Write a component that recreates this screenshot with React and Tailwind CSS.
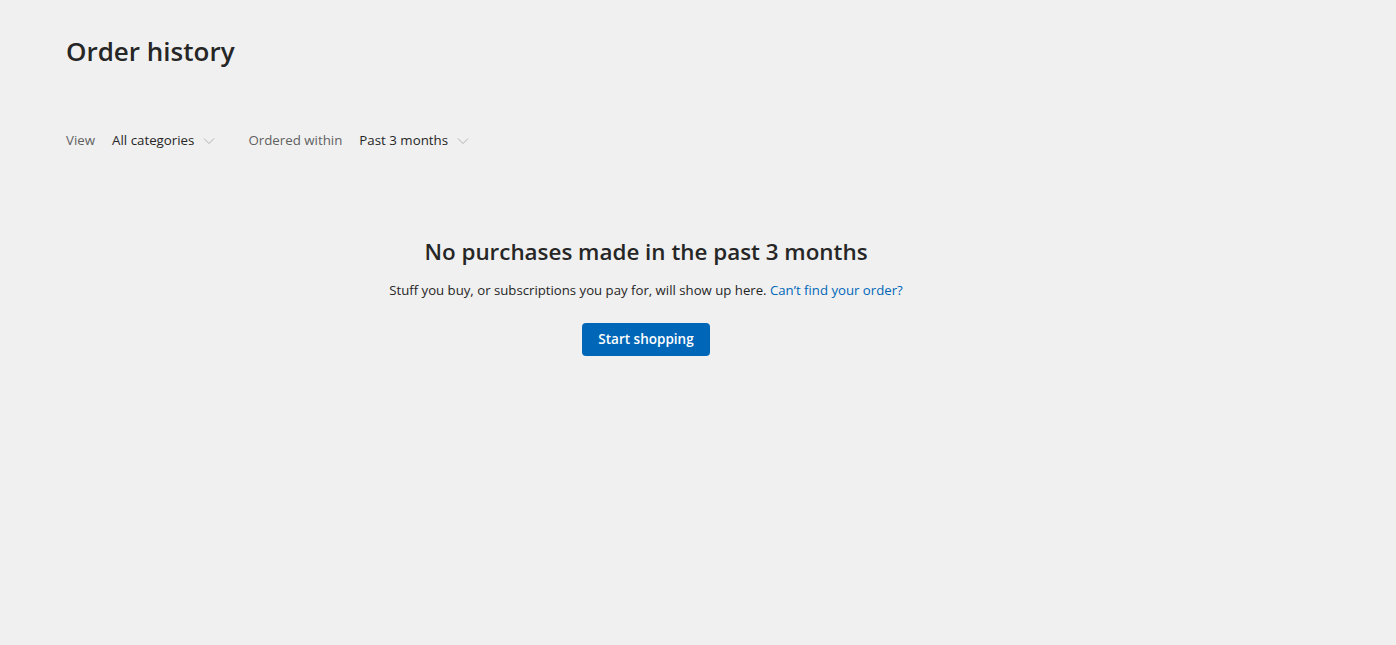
import { useState } from "react";

function Chevron() {
  return (
    <svg width="12" height="12" viewBox="0 0 12 12" className="ml-[9px] mt-[1px]">
      <path d="M1 3.5 L6 8.5 L11 3.5" fill="none" stroke="#b3b3b3" strokeWidth="1" />
    </svg>
  );
}

function Filter({ label, value }) {
  return (
    <div className="flex items-center">
      <span className="text-[#616161] mr-[17px]">{label}</span>
      <button className="flex items-center text-[#262626]">
        {value}
        <Chevron />
      </button>
    </div>
  );
}

export default function App() {
  const [view] = useState("All categories");
  const [range] = useState("Past 3 months");

  return (
    <div
      className="min-h-[645px] bg-[#f0f0f0] text-[#262626]"
      style={{ fontFamily: '"Open Sans", "Noto Sans", sans-serif' }}
    >
      <div className="w-[1160px] ml-[66px]">
        {/* Title */}
        <h1 className="pt-[31px] text-[26px] leading-[40px] font-semibold text-[#262626]">
          Order history
        </h1>

        {/* Filters */}
        <div className="mt-[60px] flex items-center gap-[33px] text-[13.3px]">
          <Filter label="View" value={view} />
          <Filter label="Ordered within" value={range} />
        </div>

        {/* Empty state */}
        <div className="mt-[85px] flex flex-col items-center text-center">
          <h2 className="text-[22.4px] leading-[32px] font-semibold text-[#262626]">
            No purchases made in the past 3 months
          </h2>
          <p className="mt-[12px] text-[13.2px] leading-[20px] text-[#262626]">
            Stuff you buy, or subscriptions you pay for, will show up here.{" "}
            <a href="#" className="text-[#0067b8]">Can’t find your order?</a>
          </p>
          <button className="mt-[23px] h-[33px] w-[128px] rounded-[4px] bg-[#0067b8] text-white text-[13.5px] font-semibold">
            Start shopping
          </button>
        </div>
      </div>
    </div>
  );
}
